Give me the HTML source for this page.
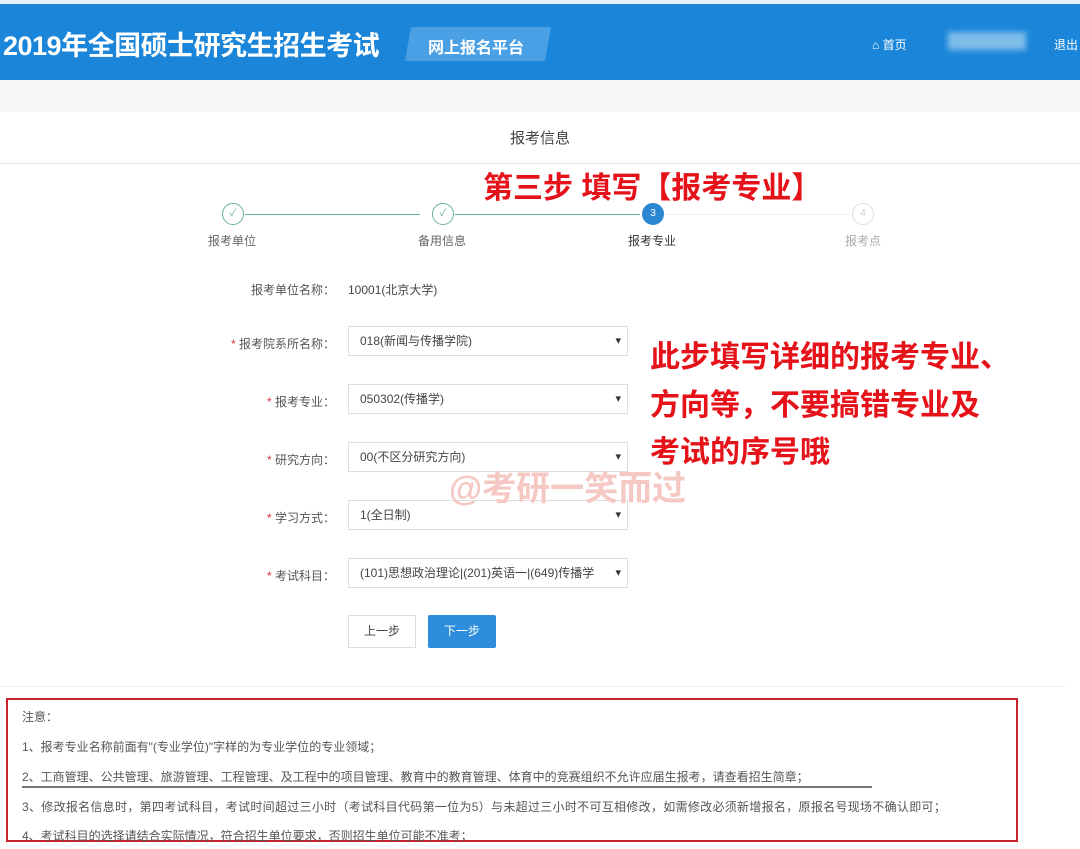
<!DOCTYPE html><html><head><meta charset="utf-8"><style>
body{margin:0;width:1080px;height:849px;background:#fff;font-family:"Liberation Sans","Noto Sans CJK SC",sans-serif;position:relative;overflow:hidden;color:#555}
.a{position:absolute}
.hdr{left:0;top:4px;width:1080px;height:76px;background:#1b86d9}
.sel{position:absolute;left:348px;width:280px;height:30px;border:1px solid #ddd;box-sizing:border-box;font-size:12px;color:#444;line-height:28px;padding-left:11px;white-space:nowrap;overflow:hidden}
.sel:after{content:"▾";position:absolute;right:6px;top:0;font-size:11px;color:#333}
.lab{position:absolute;right:745px;font-size:12px;color:#555;white-space:nowrap}
.lab b{color:#d9333f;font-weight:normal}
.red{color:#e5121a;font-weight:bold;font-size:30px;position:absolute;left:650px;white-space:nowrap}
.step{position:absolute;width:22px;height:22px;border-radius:50%;box-sizing:border-box;border:1px solid #6aaea0;font-size:10px;text-align:center;line-height:20px;color:#6aaea0}
.sl{position:absolute;font-size:12px;color:#666}
.n{font-size:12px;color:#555;position:absolute;left:22px;white-space:nowrap}
</style></head><body>
<div class="a hdr"></div>
<div class="a" style="left:0;top:0;width:1080px;height:4px;background:#e9f2f8"></div>
<div class="a" style="left:3px;top:24px;font-size:27px;font-weight:bold;color:#fff;letter-spacing:-0.5px;white-space:nowrap">2019年全国硕士研究生招生考试</div>
<div class="a" style="left:408px;top:27px;width:140px;height:34px;background:#4aa0e4;transform:skewX(-10deg)"></div>
<div class="a" style="left:428px;top:34px;font-size:16px;font-weight:bold;color:#fff">网上报名平台</div>
<div class="a" style="left:872px;top:36px;font-size:12px;color:#fff">⌂ 首页</div>
<div class="a" style="left:948px;top:32px;width:78px;height:18px;background:#7fbde9;filter:blur(3px)"></div>
<div class="a" style="left:1054px;top:36px;font-size:12px;color:#fff">退出</div>
<div class="a" style="left:0;top:80px;width:1080px;height:32px;background:#f6f6f6"></div>
<div class="a" style="left:510px;top:127px;font-size:15px;color:#444">报考信息</div>
<div class="a" style="left:0;top:163px;width:1080px;height:1px;background:#e5e5e5"></div>
<div class="a" style="left:483px;top:163px;font-size:30px;font-weight:bold;color:#e5121a;white-space:nowrap">第三步 填写【报考专业】</div>
<div class="a" style="left:245px;top:214px;width:175px;height:1px;background:#6aaea0"></div>
<div class="a" style="left:455px;top:214px;width:185px;height:1px;background:#6aaea0"></div>
<div class="a" style="left:665px;top:214px;width:185px;height:1px;background:#eee"></div>
<div class="step" style="left:222px;top:203px">✓</div>
<div class="step" style="left:432px;top:203px">✓</div>
<div class="step" style="left:642px;top:203px;background:#2b87d1;border-color:#2b87d1;color:#fff">3</div>
<div class="step" style="left:852px;top:203px;border-color:#ddd;color:#ccc">4</div>
<div class="sl" style="left:208px;top:232px">报考单位</div>
<div class="sl" style="left:418px;top:232px">备用信息</div>
<div class="sl" style="left:628px;top:232px;color:#333">报考专业</div>
<div class="sl" style="left:845px;top:232px;color:#aaa">报考点</div>
<div class="lab" style="top:281px">报考单位名称：</div>
<div class="a" style="left:348px;top:281px;font-size:12px;color:#444">10001(北京大学)</div>
<div class="lab" style="top:335px"><b>* </b>报考院系所名称：</div><div class="sel" style="top:326px">018(新闻与传播学院)</div>
<div class="lab" style="top:393px"><b>* </b>报考专业：</div><div class="sel" style="top:384px">050302(传播学)</div>
<div class="lab" style="top:451px"><b>* </b>研究方向：</div><div class="sel" style="top:442px">00(不区分研究方向)</div>
<div class="lab" style="top:509px"><b>* </b>学习方式：</div><div class="sel" style="top:500px">1(全日制)</div>
<div class="lab" style="top:567px"><b>* </b>考试科目：</div><div class="sel" style="top:558px">(101)思想政治理论|(201)英语一|(649)传播学</div>
<div class="red" style="top:332px">此步填写详细的报考专业、</div>
<div class="red" style="top:380px">方向等，不要搞错专业及</div>
<div class="red" style="top:427px">考试的序号哦</div>
<div class="a" style="left:449px;top:461px;font-size:34px;color:#f5c8c4;font-weight:bold;white-space:nowrap">@考研一笑而过</div>
<div class="a" style="left:348px;top:615px;width:68px;height:33px;border:1px solid #ddd;box-sizing:border-box;font-size:12px;text-align:center;line-height:31px;color:#444">上一步</div>
<div class="a" style="left:428px;top:615px;width:68px;height:33px;background:#2d8ddc;font-size:12px;text-align:center;line-height:33px;color:#fff;border-radius:2px">下一步</div>
<div class="a" style="left:0;top:686px;width:1065px;height:1px;background:#eee"></div>
<div class="a" style="left:6px;top:698px;width:1012px;height:144px;border:2px solid #c9232b;box-sizing:border-box">
<div class="n" style="left:14px;top:8px">注意：</div>
<div class="n" style="left:14px;top:38px">1、报考专业名称前面有"(专业学位)"字样的为专业学位的专业领域；</div>
<div class="n" style="left:14px;top:68px">2、工商管理、公共管理、旅游管理、工程管理、及工程中的项目管理、教育中的教育管理、体育中的竞赛组织不允许应届生报考，请查看招生简章；</div>
<div class="a" style="left:14px;top:86px;width:850px;height:2px;background:#777"></div>
<div class="n" style="left:14px;top:98px;letter-spacing:0.3px">3、修改报名信息时，第四考试科目，考试时间超过三小时（考试科目代码第一位为5）与未超过三小时不可互相修改，如需修改必须新增报名，原报名号现场不确认即可；</div>
<div class="n" style="left:14px;top:127px">4、考试科目的选择请结合实际情况，符合招生单位要求，否则招生单位可能不准考；</div>
</div>
</body></html>
